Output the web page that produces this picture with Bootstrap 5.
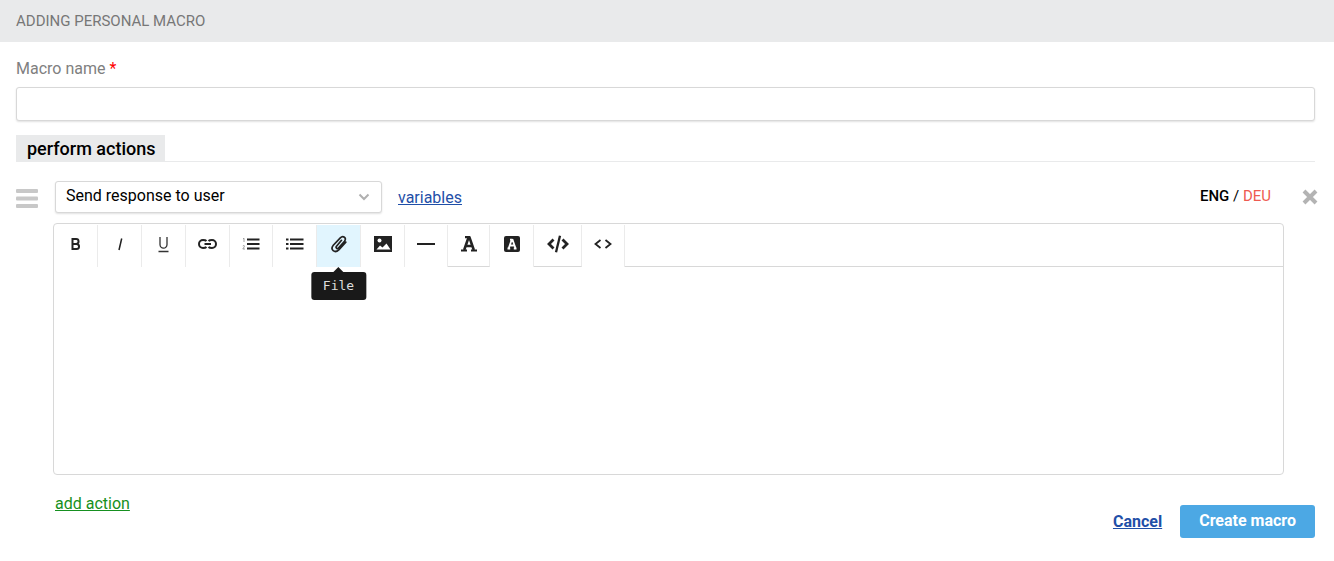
<!DOCTYPE html>
<html lang="en">
<head>
<meta charset="utf-8">
<meta name="viewport" content="width=device-width, initial-scale=1">
<title>Adding personal macro</title>
<link href="https://cdn.jsdelivr.net/npm/bootstrap@5.3.0/dist/css/bootstrap.min.css" rel="stylesheet">
<style>
  body { font-family: Roboto, "Liberation Sans", sans-serif; font-size: 16px; line-height: 20px; color: #000; }
  .page-head { background: #e9eaeb; color: #777; font-size: 15px; font-weight: 400; line-height: 20px; padding: 11px 16px; }
  .macro-form { padding: 17px 19px 16px 16px; }
  .macro-form label { color: #808080; }
  .req { color: #f00; }
  .field { border: 1px solid #d8d8d8; border-radius: 3px; box-shadow: 0 1px 2px rgba(0,0,0,.12); }
  .name-field { height: 34px; margin: 8px 0 14px; }
  .section-head { border-bottom: 1px solid #e9eaeb; margin-bottom: 19px; }
  .section-head h2 { background: #e9eaeb; font-size: 18px; font-weight: 500; line-height: 24px; padding: 2px 9px 0 11px; }
  .action-row { column-gap: 11px; }
  .handle { margin-top: 8px; width: 26px; }
  .icon-btn { background: none; border: 0; padding: 0; line-height: 0; }
  .action-body { min-width: 0; }
  .action-type { width: 327px; height: 32px; padding: 0 32px 2px 10px; line-height: 20px; font-size: 16px; color: #000; margin-left: 2px;
    background-image: url("data:image/svg+xml,%3Csvg xmlns='http://www.w3.org/2000/svg' viewBox='0 0 12 12'%3E%3Cpath d='M1.500 3.500 6 8l4.500-4.500' fill='none' stroke='%23b0b0b0' stroke-width='2'/%3E%3C/svg%3E");
    background-size: 12px 12px; background-position: right 11px center; }
  a { color: #1f4fa8; }
  .vars { margin-top: 2px; }
  .langs { font-size: 15px; line-height: 18px; padding-right: 13px; padding-bottom: 2px; }
  .langs strong { font-weight: 500; }
  .langs a { color: #ee5a50; }
  .editor { border: 1px solid #d8d8d8; border-radius: 4px; margin-top: 10px; }
  .tools { height: 43px; padding-top: 1px; }
  .tool { width: 44px; padding: 0 0 4px; background: none; border: 0; border-right: 1px solid #ebebeb; color: #222; line-height: 20px; font-size: 16px; }
  .tool-sm { width: 43px; }
  .tool-xs { width: 42px; }
  .tool-lg { width: 48px; }
  .tool.on { background: #e1f5fe; }
  .ruled { border-bottom: 1px solid #d8d8d8; padding-bottom: 3px; }
  .tool svg, .handle svg, .remove svg { display: block; margin: 0 auto; }
  .handle svg { margin-left: 0; }
  .tip { top: 47px; left: 50%; transform: translateX(-50%); background: #191919; color: #ddd; border-radius: 3px; font: 13px/18px "DejaVu Sans Mono", monospace; padding: 5px 12px; z-index: 2; }
  .tip::before { content: ""; position: absolute; left: 50%; top: -5px; margin-left: -5px; border: 5px solid transparent; border-top: 0; border-bottom-color: #191919; }
  .editor textarea { background: transparent; border: 0; outline: 0; resize: none; height: 207px; padding: 12px; }
  .remove { margin: 8px -3px 0 7px; width: 16px; }
  .form-foot { padding-left: 39px; margin-top: 19px; }
  .add-link { color: #169020; }
  .form-acts { margin-top: 11px; column-gap: 18px; }
  .form-acts a { font-weight: 700; padding-top: 1px; }
  .btn-create { background: #4ca8e4; color: #fff; font-size: 16px; font-weight: 700; line-height: 20px; padding: 6px 19px 7px; border: 0; border-radius: 3px; }
</style>
</head>
<body>
<h1 class="page-head m-0">ADDING PERSONAL MACRO</h1>
<form class="macro-form">
  <label for="macro-name" class="d-block">Macro name <span class="req">*</span></label>
  <input id="macro-name" type="text" class="field name-field d-block w-100 px-2">
  <div class="section-head d-flex"><h2 class="m-0">perform actions</h2></div>

  <div class="action-row d-flex align-items-start">
    <button type="button" class="icon-btn handle" aria-label="Move action">
      <svg width="24" height="20" viewBox="0 0 24 20" fill="#c8c8c8"><rect x="0" y="0" width="22" height="4" rx="1"/><rect x="0" y="7.500" width="22" height="4" rx="1"/><rect x="0" y="15" width="22" height="4" rx="1"/></svg>
    </button>
    <div class="action-body flex-grow-1">
      <div class="d-flex align-items-center">
        <select class="form-select field action-type" aria-label="Action"><option>Send response to user</option></select>
        <a href="#" class="vars ms-3">variables</a>
        <div class="langs ms-auto"><strong>ENG</strong> / <a href="#" class="text-decoration-none">DEU</a></div>
      </div>
      <div class="editor">
        <div class="tools d-flex" role="toolbar" aria-label="Formatting">
          <button type="button" class="tool" aria-label="Bold"><svg width="18" height="18" viewBox="0 0 18 18" fill="none" stroke="#222" stroke-width="2"><path d="M5.500 4h3.600a2.300 2.300 0 0 1 0 4.900H5.500zM5.500 8.900h4a2.550 2.550 0 0 1 0 5.100h-4z"/></svg></button>
          <button type="button" class="tool" aria-label="Italic"><svg width="18" height="18" viewBox="0 0 18 18" fill="none" stroke="#222" stroke-width="1.500"><path d="M10.700 3.500 8 15"/></svg></button>
          <button type="button" class="tool" aria-label="Underline"><svg width="18" height="18" viewBox="0 0 18 18" fill="none" stroke="#333" stroke-width="1.300"><path d="M5 2v7.500a3.500 3.700 0 0 0 7 0V2M3.500 16.500h10"/></svg></button>
          <button type="button" class="tool" aria-label="Link"><svg width="20" height="18" viewBox="0 0 20 18" fill="none" stroke="#222" stroke-width="2"><path d="M8.500 6C7.500 5 6.500 5 5 5a3.700 3.700 0 0 0 0 8c1.500 0 2.500 0 3.500-1M10.500 6C11.500 5 12.500 5 14 5a3.700 3.700 0 0 1 0 8c-1.500 0-2.500 0-3.500-1M6.500 9h6.500"/></svg></button>
          <button type="button" class="tool tool-sm" aria-label="Numbered list"><svg width="18" height="18" viewBox="0 0 18 18" fill="none" stroke="#222" stroke-width="2"><path d="M5 4.500h12.500M5 9h12.500M5 13.500h12.500"/><path stroke="#888" stroke-width=".8" d="M1 4l1-.8V7M.8 11q1.800-1.200 1.700.4L.8 14h2.200"/></svg></button>
          <button type="button" class="tool" aria-label="Bulleted list"><svg width="18" height="18" viewBox="0 0 18 18" fill="none" stroke="#222" stroke-width="2"><path d="M4 4.500h13.500M4 9h13.500M4 13.500h13.500M0 4.500h2.500M0 9h2.500M0 13.500h2.500"/></svg></button>
          <button type="button" class="tool on position-relative" aria-label="File" aria-describedby="file-tip">
            <svg width="18" height="20" viewBox="0 0 18 20" fill="none" stroke="#222" stroke-width="1.700" stroke-linecap="round"><path d="M11.500 6.300 6.500 12.200c-1.200 1.600.8 3.200 2.200 1.600l5.800-6.600c2.700-3.400-1.500-6-4.200-3.300L3.300 11.200c-3.500 4.400 1.400 8.500 5.500 4.600l7-7.600"/></svg>
            <span class="tip position-absolute" role="tooltip" id="file-tip">File</span>
          </button>
          <button type="button" class="tool" aria-label="Image"><svg width="18" height="16" viewBox="0 0 18 16"><path fill="#222" d="M0 0h18v16H0z"/><circle cx="5.500" cy="4.500" r="2" fill="#fff"/><path fill="#fff" d="M2.500 13.500 6 9.500l2.500 2 4-4 4 6z"/></svg></button>
          <button type="button" class="tool tool-sm" aria-label="Horizontal line"><svg width="18" height="18" viewBox="0 0 18 18"><path stroke="#222" stroke-width="2" d="M0 9h18"/></svg></button>
          <button type="button" class="tool tool-xs ruled" aria-label="Text colour"><svg width="16" height="16" viewBox="0 0 16 16" fill="none" stroke="#222"><path stroke-width="2.600" d="M3.200 14 7.500 1.500h1L12.800 14M5 10h6"/><path stroke-width="2.200" d="M0 14.500h6M10 14.500h6M4 1.200h5"/></svg></button>
          <button type="button" class="tool" aria-label="Background colour"><svg width="16" height="16" viewBox="0 0 16 16"><rect width="16" height="16" rx="2" fill="#222"/><path fill="none" stroke="#fff" stroke-width="1.800" d="M4.700 12.300 7.700 4h.9l2.900 8.300M6 9.500h4.300M3.500 12.500h2.700M9.800 12.500h2.700M6 3.700h2.500"/></svg></button>
          <button type="button" class="tool tool-lg ruled" aria-label="Code block"><svg width="22" height="18" viewBox="0 0 22 18" fill="none" stroke="#222" stroke-width="2.800"><path d="M6.500 4.500 2 9l4.500 4.500M15.500 4.500 20 9l-4.500 4.500"/><path stroke-width="2.300" d="M13 .8 9 17.200"/></svg></button>
          <button type="button" class="tool tool-sm" aria-label="HTML source"><svg width="18" height="18" viewBox="0 0 18 18" fill="none" stroke="#222" stroke-width="1.800"><path d="M6.500 5 1.500 9l5 4M11.500 5l5 4-5 4"/></svg></button>
          <div class="ruled flex-grow-1"></div>
        </div>
        <textarea class="d-block w-100" aria-label="Response"></textarea>
      </div>
    </div>
    <button type="button" class="icon-btn remove" aria-label="Remove action"><svg width="16" height="16" viewBox="0 0 16 16"><path stroke="#b3b3b3" stroke-width="4" d="m2 2 12 12M14 2 2 14"/></svg></button>
  </div>

  <div class="form-foot d-flex justify-content-between align-items-start">
    <a href="#" class="add-link">add action</a>
    <div class="form-acts d-flex align-items-center">
      <a href="#">Cancel</a>
      <button type="submit" class="btn btn-create">Create macro</button>
    </div>
  </div>
</form>
<script src="https://cdn.jsdelivr.net/npm/bootstrap@5.3.0/dist/js/bootstrap.bundle.min.js"></script>
</body>
</html>
